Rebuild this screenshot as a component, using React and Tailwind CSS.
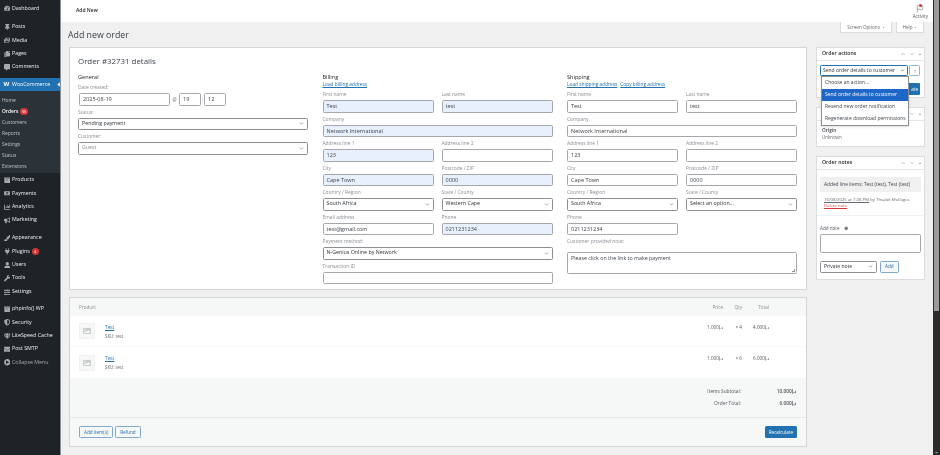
import React from "react";
import { ChevronDown, ChevronUp, ChevronRight, Flag, HelpCircle } from "lucide-react";
import {
  FaTachometerAlt, FaThumbtack, FaPhotoVideo, FaCopy, FaCommentAlt, FaArchive, FaMoneyBillAlt, FaChartBar,
  FaBullhorn, FaPaintBrush, FaPlug, FaUser, FaWrench, FaSlidersH, FaShieldAlt, FaGem, FaEnvelope, FaPlayCircle, FaImage, FaCaretDown, FaCaretUp, FaCaretLeft,
} from "react-icons/fa";

const Menu = ({ icon: I, label, badge, dim }) => (
  <div className="h-[13.4px] shrink-0 flex items-center pl-[2px]">
    <span className="w-[10px] flex justify-center text-[#a7aaad]">{I && <I className="w-[6.5px] h-[6.5px]" />}</span>
    <span className={`text-[5.3px] ${dim ? "text-[#a7aaad]" : "text-[#f0f0f1]"}`}>{label}</span>
    {badge && <span className="ml-[2px] w-[7px] h-[7px] rounded-full bg-[#d63638] text-white text-[3.5px] flex items-center justify-center">{badge}</span>}
  </div>
);

const Sub = ({ label, bold, badge }) => (
  <div className={`h-[11px] flex items-center pl-[2px] text-[4.9px] ${bold ? "text-white font-semibold" : "text-[#c3c4c7]"}`}>
    {label}
    {badge && <span className="ml-[2px] w-[8px] h-[6.5px] rounded-full bg-[#d63638] text-white text-[3.5px] flex items-center justify-center">{badge}</span>}
  </div>
);

const Sidebar = () => (
  <aside className="w-[61px] shrink-0 bg-[#1d2327] border-r border-[#8c8f94] flex flex-col pt-[2px] overflow-hidden">
    <Menu icon={FaTachometerAlt} label="Dashboard" />
    <div className="h-[5px] shrink-0" />
    <Menu icon={FaThumbtack} label="Posts" />
    <Menu icon={FaPhotoVideo} label="Media" />
    <Menu icon={FaCopy} label="Pages" />
    <Menu icon={FaCommentAlt} label="Comments" />
    <div className="h-[4.5px] shrink-0" />
    <div className="h-[13px] shrink-0 bg-[#2271b1] flex items-center pl-[1px] relative">
      <span className="w-[11px] text-center text-white text-[6px] font-bold">W</span>
      <span className="text-white text-[5.3px]">WooCommerce</span>
      <FaCaretLeft className="absolute right-[-1px] w-[5px] h-[7px] text-[#f0f0f1]" />
    </div>
    <div className="bg-[#2c3338] pt-[3.5px] pb-[1.5px]">
      <Sub label="Home" />
      <Sub label="Orders" bold badge="55" />
      <Sub label="Customers" />
      <Sub label="Reports" />
      <Sub label="Settings" />
      <Sub label="Status" />
      <Sub label="Extensions" />
    </div>
    <Menu icon={FaArchive} label="Products" />
    <Menu icon={FaMoneyBillAlt} label="Payments" />
    <Menu icon={FaChartBar} label="Analytics" />
    <Menu icon={FaBullhorn} label="Marketing" />
    <div className="h-[4.5px] shrink-0" />
    <Menu icon={FaPaintBrush} label="Appearance" />
    <Menu icon={FaPlug} label="Plugins" badge="4" />
    <Menu icon={FaUser} label="Users" />
    <Menu icon={FaWrench} label="Tools" />
    <Menu icon={FaSlidersH} label="Settings" />
    <div className="h-[4px] shrink-0" />
    <Menu icon={FaArchive} label="phpinfo() WP" />
    <Menu icon={FaShieldAlt} label="Security" />
    <Menu icon={FaGem} label="LiteSpeed Cache" />
    <Menu icon={FaEnvelope} label="Post SMTP" />
    <Menu icon={FaPlayCircle} label="Collapse Menu" dim />
  </aside>
);

const Label = ({ children }) => <div className="h-[12px] pt-[3px] text-[4.9px] leading-[6px] text-[#8a8f94] whitespace-nowrap">{children}</div>;

const Box = ({ children, blue }) => (
  <div className={`h-[12.5px] rounded-[1.5px] border border-[#a4a8ad] flex items-center px-[3px] text-[5.5px] text-[#3c434a] ${blue ? "bg-[#e8f0fe]" : "bg-white"}`}>
    {children}
  </div>
);

const Select = ({ children, muted }) => (
  <div className={`h-[12.5px] rounded-[1.5px] border border-[#8c8f94] bg-white flex items-center justify-between px-[3px] text-[5.3px] ${muted ? "text-[#8a8f94]" : "text-[#2c3338]"}`}>
    <span>{children}</span>
    <ChevronDown className="w-[5px] h-[5px] text-[#50575e]" strokeWidth={2.5} />
  </div>
);

const Field = ({ label, children, wide }) => (
  <div className={wide ? "col-span-2" : ""}>
    <Label>{label}</Label>
    {children}
  </div>
);

const Billing = () => (
  <div>
    <div className="h-[7px] mt-[4px] text-[5.6px] leading-[7px] text-[#1d2327]">Billing</div>
    <div className="h-[7px] text-[4.8px] leading-[7px] text-[#2271b1] underline">Load billing address</div>
    <div className="grid grid-cols-2 gap-x-[8px]">
      <Field label="First name"><Box blue>Test</Box></Field>
      <Field label="Last name"><Box blue>test</Box></Field>
      <Field label="Company" wide><Box blue>Network International</Box></Field>
      <Field label="Address line 1"><Box blue>123</Box></Field>
      <Field label="Address line 2"><Box /></Field>
      <Field label="City"><Box blue>Cape Town</Box></Field>
      <Field label="Postcode / ZIP"><Box blue>0000</Box></Field>
      <Field label="Country / Region"><Select>South Africa</Select></Field>
      <Field label="State / County"><Select>Western Cape</Select></Field>
      <Field label="Email address"><Box>test@gmail.com</Box></Field>
      <Field label="Phone"><Box blue>0211231234</Box></Field>
      <Field label="Payment method:" wide><Select>N-Genius Online by Network</Select></Field>
      <Field label="Transaction ID" wide><Box /></Field>
    </div>
  </div>
);

const Shipping = () => (
  <div>
    <div className="h-[7px] mt-[4px] text-[5.6px] leading-[7px] text-[#1d2327]">Shipping</div>
    <div className="h-[7px] text-[4.8px] leading-[7px] text-[#2271b1] flex gap-[3px]">
      <span className="underline">Load shipping address</span>
      <span className="underline">Copy billing address</span>
    </div>
    <div className="grid grid-cols-2 gap-x-[8px]">
      <Field label="First name"><Box>Test</Box></Field>
      <Field label="Last name"><Box>test</Box></Field>
      <Field label="Company" wide><Box>Network International</Box></Field>
      <Field label="Address line 1"><Box>123</Box></Field>
      <Field label="Address line 2"><Box /></Field>
      <Field label="City"><Box>Cape Town</Box></Field>
      <Field label="Postcode / ZIP"><Box>0000</Box></Field>
      <Field label="Country / Region"><Select>South Africa</Select></Field>
      <Field label="State / County"><Select>Select an option...</Select></Field>
      <Field label="Phone"><Box>0211231234</Box></Field>
      <div />
      <div className="col-span-2 h-[17px] pt-[3px] text-[4.9px] leading-[6px] text-[#8a8f94]">Customer provided note:</div>
      <div className="col-span-2 h-[22px] rounded-[1.5px] border border-[#a4a8ad] bg-white px-[3px] pt-[2px] text-[5.3px] leading-[7px] text-[#3c434a] relative">
        Please click on the link to make payment
        <span className="absolute right-[1px] bottom-[1px] w-[3px] h-[3px] border-b border-r border-[#8c8f94]" />
      </div>
    </div>
  </div>
);

const General = () => (
  <div>
    <div className="h-[7px] mt-[4px] text-[5.6px] leading-[7px] text-[#1d2327]">General</div>
    <Label>Date created:</Label>
    <div className="flex items-center">
      <div className="w-[91px] ml-[1px]"><Box>2025-08-19</Box></div>
      <span className="w-[9px] text-center text-[4.5px] text-[#646970]">@</span>
      <div className="w-[22px]"><Box>19</Box></div>
      <span className="w-[3px] text-center text-[4.5px] text-[#646970]">:</span>
      <div className="w-[22px]"><Box>12</Box></div>
    </div>
    <Label>Status:</Label>
    <Select>Pending payment</Select>
    <Label>Customer:</Label>
    <Select muted>Guest</Select>
  </div>
);

const Thumb = () => (
  <div className="w-[16px] h-[16px] bg-[#f6f7f7] border border-[#f0f0f1] flex items-center justify-center">
    <FaImage className="w-[8px] h-[8px] text-[#c9cbce]" />
  </div>
);

const Item = ({ qty, total, border }) => (
  <div className={`h-[31px] flex items-center pl-[9px] pr-[37px] ${border ? "border-b border-[#f6f7f7]" : ""}`}>
    <Thumb />
    <div className="ml-[10px] flex-1">
      <div className="text-[4.8px] leading-[7px] text-[#2271b1] underline">Test</div>
      <div className="mt-[2px] text-[4.4px] leading-[6px] text-[#646970]">SKU: test</div>
    </div>
    <div className="flex text-[4.6px] text-[#50575e] self-start pt-[8px]">
      <span className="w-[22px] text-right">1.000د.إ</span>
      <span className="w-[19px] text-right">× {qty}</span>
      <span className="w-[27px] text-right">{total}د.إ</span>
    </div>
  </div>
);

const Items = () => (
  <section className="h-[150px] mt-[7px] bg-[#f6f7f7] border border-[#d3d5d8] flex flex-col">
    <div className="h-[18px] shrink-0 flex items-center justify-between pl-[9px] pr-[37px] text-[4.6px] text-[#8a8f94]">
      <span>Product</span>
      <div className="flex">
        <span className="w-[22px] text-right">Price</span>
        <span className="w-[19px] text-right">Qty</span>
        <span className="w-[27px] text-right">Total</span>
      </div>
    </div>
    <div className="bg-white">
      <Item qty="4" total="4.000" border />
      <Item qty="6" total="6.000" />
    </div>
    <div className="h-[40px] shrink-0 border-b border-[#e7e8e9] flex flex-col items-end pt-[8px] pr-[10px] text-[4.8px] text-[#50575e]">
      <div className="flex h-[12px] items-center"><span>Items Subtotal:</span><b className="w-[55px] text-right font-semibold">10.000د.إ</b></div>
      <div className="flex h-[12px] items-center"><span>Order Total:</span><b className="w-[55px] text-right font-semibold">6.000د.إ</b></div>
    </div>
    <div className="flex-1 flex items-center justify-between pl-[9px] pr-[9px]">
      <div className="flex gap-[2px]">
        <span className="h-[12px] px-[4px] flex items-center rounded-[1.5px] border border-[#7fa8cc] bg-[#f6f7f7] text-[4.6px] text-[#2271b1]">Add item(s)</span>
        <span className="h-[12px] px-[4px] flex items-center rounded-[1.5px] border border-[#7fa8cc] bg-[#f6f7f7] text-[4.6px] text-[#2271b1]">Refund</span>
      </div>
      <span className="h-[12px] px-[4px] flex items-center rounded-[1.5px] bg-[#2271b1] text-[4.6px] text-white">Recalculate</span>
    </div>
  </section>
);

const Arrows = () => (
  <div className="flex items-center gap-[3px] text-[#8a8f94]">
    <ChevronUp className="w-[6px] h-[6px]" strokeWidth={2} />
    <ChevronDown className="w-[6px] h-[6px]" strokeWidth={2} />
    <FaCaretUp className="w-[4px] h-[4px]" />
  </div>
);

const PanelHead = ({ title }) => (
  <div className="h-[13px] border-b border-[#e4e5e7] flex items-center justify-between pl-[5px] pr-[2px]">
    <span className="text-[5.2px] font-semibold text-[#1d2327]">{title}</span>
    <Arrows />
  </div>
);

const Side = () => (
  <div className="w-[109px] shrink-0 flex flex-col">
    <section className="h-[51px] bg-white border border-[#dcdcde] relative">
      <PanelHead title="Order actions" />
      <div className="flex items-center gap-[1px] pl-[3px] pt-[4px]">
        <div className="w-[88px] h-[11px] border border-[#2271b1] rounded-[1.5px] flex items-center justify-between px-[2px] text-[5px] text-[#2c3338]">
          <span className="whitespace-nowrap">Send order details to customer</span>
          <ChevronDown className="w-[5px] h-[5px] shrink-0" strokeWidth={2.5} />
        </div>
        <div className="w-[11px] h-[11px] border border-[#8fb4d4] rounded-[1.5px] flex items-center justify-center text-[#2271b1]">
          <ChevronRight className="w-[4px] h-[4px]" strokeWidth={3} />
        </div>
      </div>
      <div className="absolute left-[80px] top-[35px] w-[23px] h-[12px] bg-[#2271b1] rounded-[1px] flex items-center justify-end pr-[2px] text-[4.6px] text-white">ate</div>
      <div className="absolute z-10 left-[4px] top-[28px] w-[88px] bg-white border border-[#8c8f94] shadow-sm text-[5px] text-[#3c434a]">
        <div className="h-[12px] flex items-center px-[3px]">Choose an action...</div>
        <div className="h-[12px] flex items-center px-[3px] bg-[#1e66c8] text-white">Send order details to customer</div>
        <div className="h-[12px] flex items-center px-[3px]">Resend new order notification</div>
        <div className="h-[12px] flex items-center px-[3px] whitespace-nowrap">Regenerate download permissions</div>
      </div>
    </section>
    <section className="h-[40px] mt-[9px] bg-white border border-[#dcdcde]">
      <PanelHead title="Order attribution" />
      <div className="pl-[5px] pt-[6px] text-[4.8px] leading-[7px] font-semibold text-[#3c434a]">Origin</div>
      <div className="pl-[5px] text-[4.4px] leading-[6px] text-[#646970]">Unknown</div>
    </section>
    <section className="h-[124px] mt-[9px] bg-white border border-[#dcdcde]">
      <PanelHead title="Order notes" />
      <div className="mx-[3px] mt-[7px] h-[15px] bg-[#f0f0f1] flex items-center px-[4px] text-[4.8px] text-[#3c434a] whitespace-nowrap">Added line items: Test (test), Test (test)</div>
      <div className="mx-[7px] mt-[4px] text-[4.3px] leading-[6px] text-[#646970] whitespace-nowrap"><span className="underline">16/08/2025 at 7:28 PM</span> by Thsabit Mollages</div>
      <div className="mx-[7px] text-[4.3px] leading-[6px] text-[#d63638] underline">Delete note</div>
      <div className="mt-[7px] border-t border-[#f0f0f1] pl-[3px] pr-[3px]">
        <div className="mt-[9px] flex items-center gap-[4px] text-[4.6px] text-[#50575e]">
          Add note
          <HelpCircle className="w-[4.5px] h-[4.5px]" fill="#50575e" stroke="#fff" />
        </div>
        <div className="mt-[2px] h-[19px] rounded-[1.5px] border border-[#a4a8ad] bg-white" />
        <div className="mt-[8px] flex items-center gap-[3px]">
          <div className="w-[57px] h-[12px] rounded-[1.5px] border border-[#8c8f94] bg-white flex items-center justify-between px-[3px] text-[5px] text-[#2c3338]">
            <span>Private note</span>
            <ChevronDown className="w-[5px] h-[5px]" strokeWidth={2.5} />
          </div>
          <span className="h-[12px] px-[4px] flex items-center rounded-[1.5px] border border-[#7fa8cc] bg-[#f6f7f7] text-[4.6px] text-[#2271b1]">Add</span>
        </div>
      </div>
    </section>
  </div>
);

const Scrollbar = () => (
  <div className="w-[7px] shrink-0 bg-[#2b2b2b] px-[1px] flex flex-col justify-between">
    <div className="h-[311px] bg-[#9b9b9b]" />
    <div className="h-[5px] flex items-center justify-center text-[#9b9b9b]"><FaCaretDown className="w-[5px] h-[5px]" /></div>
  </div>
);

export default function App() {
  return (
    <div className="w-[940px] h-[455px] overflow-hidden flex bg-[#f0f0f1] font-['Open_Sans',sans-serif] blur-[0.35px]">
      <Sidebar />
      <div className="flex-1 flex flex-col min-w-0">
        <header className="h-[22px] shrink-0 bg-white flex items-center justify-between pl-[15px] pr-[5px]">
          <span className="text-[5px] font-semibold text-[#1d2327]">Add New</span>
          <div className="flex flex-col items-center text-[#50575e] relative">
            <Flag className="w-[8px] h-[9px]" strokeWidth={1.5} />
            <span className="absolute top-0 right-[6px] w-[3px] h-[3px] rounded-full bg-[#d63638]" />
            <span className="text-[4.6px] leading-[6px]">Activity</span>
          </div>
        </header>
        <div className="flex justify-end gap-[4px] pr-[9px] shrink-0">
          <div className="h-[11px] w-[52px] bg-white border border-t-0 border-[#dcdcde] flex items-center justify-center gap-[2px] text-[4.6px] text-[#646970]">Screen Options <FaCaretDown className="w-[3px] h-[3px]" /></div>
          <div className="h-[11px] w-[28px] bg-white border border-t-0 border-[#dcdcde] flex items-center justify-center gap-[2px] text-[4.6px] text-[#646970]">Help <FaCaretDown className="w-[3px] h-[3px]" /></div>
        </div>
        <h1 className="h-[14px] shrink-0 ml-[7px] text-[8.8px] leading-[5px] text-[#3c434a]">Add new order</h1>
        <div className="flex pl-[8px] gap-[9px]">
          <main className="w-[738px] shrink-0">
            <section className="h-[243px] bg-white border border-[#d3d5d8] pl-[8px] pt-[7px]">
              <h2 className="h-[15px] text-[7.9px] leading-[12px] text-[#3c434a]">Order #32731 details</h2>
              <div className="grid grid-cols-[230px_230px_230px] gap-x-[14.5px]">
                <General />
                <Billing />
                <Shipping />
              </div>
            </section>
            <Items />
            <section className="h-[20px] mt-[8px] bg-white border border-[#d3d5d8]" />
          </main>
          <Side />
        </div>
      </div>
      <Scrollbar />
    </div>
  );
}
